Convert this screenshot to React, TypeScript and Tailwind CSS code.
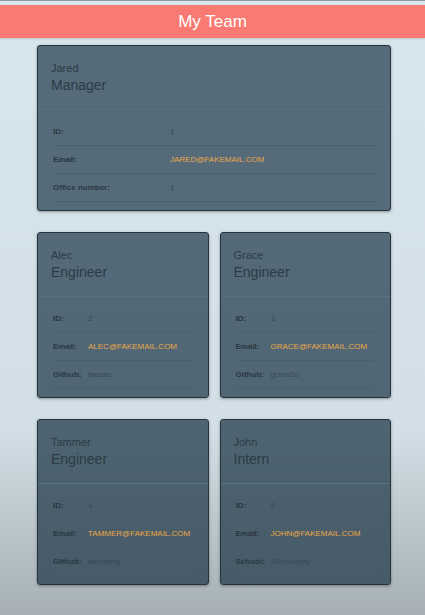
type Row = { label: string; value: string; email?: boolean };

const team: { name: string; role: string; rows: Row[] }[] = [
  {
    name: "Alec",
    role: "Engineer",
    rows: [
      { label: "ID:", value: "2" },
      { label: "Email:", value: "ALEC@FAKEMAIL.COM", email: true },
      { label: "Github:", value: "ibealec" },
    ],
  },
  {
    name: "Grace",
    role: "Engineer",
    rows: [
      { label: "ID:", value: "3" },
      { label: "Email:", value: "GRACE@FAKEMAIL.COM", email: true },
      { label: "Github:", value: "gchoi2u" },
    ],
  },
  {
    name: "Tammer",
    role: "Engineer",
    rows: [
      { label: "ID:", value: "4" },
      { label: "Email:", value: "TAMMER@FAKEMAIL.COM", email: true },
      { label: "Github:", value: "tammerg" },
    ],
  },
  {
    name: "John",
    role: "Intern",
    rows: [
      { label: "ID:", value: "5" },
      { label: "Email:", value: "JOHN@FAKEMAIL.COM", email: true },
      { label: "School:", value: "2University" },
    ],
  },
];

const Card = ({
  name,
  role,
  rows,
  cols,
  bg,
}: {
  name: string;
  role: string;
  rows: Row[];
  cols: string;
  bg: string;
}) => (
  <div
    className={`rounded-[3px] border border-[#27333c] shadow-[0_1px_3px_rgba(0,0,0,0.35)] ${bg}`}
  >
    {/* Header */}
    <div className="px-[13px] pt-[16px] pb-[15px] border-b border-[#5a7181] text-[#2c3a44]">
      <p className="text-[11px] leading-[13px]">{name}</p>
      <p className="text-[14px] leading-[18px] mt-[1px]">{role}</p>
    </div>

    {/* Details */}
    <div className="px-[15px] pt-[8px] pb-[8px]">
      {rows.map((r) => (
        <div
          key={r.label}
          className={`grid ${cols} items-center h-[28px] border-b border-[#4b606e] text-[8px]`}
        >
          <span className="font-bold text-[#2a3741]">{r.label}</span>
          <span className={r.email ? "text-[#eba748]" : "text-[#384854]"}>
            {r.value}
          </span>
        </div>
      ))}
    </div>
  </div>
);

export default function App() {
  return (
    <div
      className="min-h-[615px] border-t border-[#8e989c] bg-gradient-to-b from-[#d8e6ee] via-[#d2dfe6] via-70% to-[#a5afb3]"
      style={{ fontFamily: '"Liberation Sans", Arial, sans-serif' }}
    >
      <div className="pt-[4px]">
        <div className="h-[33px] bg-[#f97a72] flex items-center justify-center shadow-[0_1px_2px_rgba(0,0,0,0.15)]">
          <h1 className="text-white text-[17px]">My Team</h1>
        </div>
      </div>

      <div className="ml-[37px] mr-[34px] mt-[7px] flex flex-col gap-[21px] pb-[32px]">
        <Card
          name="Jared"
          role="Manager"
          cols="grid-cols-[117px_1fr]"
          bg="bg-[#556b7a]"
          rows={[
            { label: "ID:", value: "1" },
            { label: "Email:", value: "JARED@FAKEMAIL.COM", email: true },
            { label: "Office number:", value: "1" },
          ]}
        />

        <div className="grid grid-cols-2 gap-x-[11px] gap-y-[21px]">
          {team.map((m, i) => (
            <Card
              key={m.name}
              {...m}
              cols="grid-cols-[35px_1fr]"
              bg={
                i < 2
                  ? "bg-gradient-to-b from-[#546a79] to-[#506674]"
                  : "bg-gradient-to-b from-[#4f6471] to-[#465a67]"
              }
            />
          ))}
        </div>
      </div>
    </div>
  );
}
